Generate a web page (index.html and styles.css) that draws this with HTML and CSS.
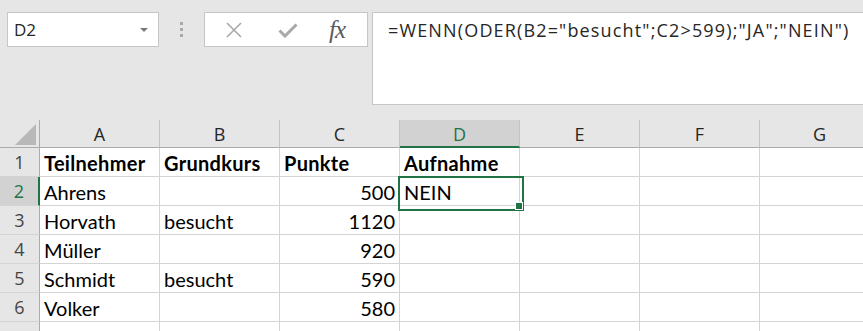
FILE: index.html
```html
<!DOCTYPE html>
<html lang="de">
<head>
<meta charset="utf-8">
<link rel="stylesheet" href="styles.css">
</head>
<body>
<div class="bar">
  <div class="namebox">
    <span class="name">D2</span>
    <svg class="drop" width="8" height="4" viewBox="0 0 8 4"><path d="M0 0H8L4 4Z" fill="#7a7a7a"/></svg>
  </div>
  <div class="dots"><i></i><i></i><i></i></div>
  <div class="buttons">
    <svg class="ico" width="18" height="16" viewBox="0 0 18 16"><path d="M2 1L16 15M16 1L2 15" stroke="#a9a9a9" stroke-width="1.6" fill="none"/></svg>
    <svg class="ico" width="20" height="16" viewBox="0 0 20 16"><path d="M1.5 8.5L7 14L18.5 2.5" stroke="#a9a9a9" stroke-width="3" fill="none"/></svg>
    <span class="fx">fx</span>
  </div>
  <div class="formula">=WENN(ODER(B2="besucht";C2&gt;599);"JA";"NEIN")</div>
</div>
<div class="sheet">
  <div class="corner"><span class="tri"></span></div>
  <div class="ch">A</div><div class="ch">B</div><div class="ch">C</div><div class="ch sel">D</div><div class="ch">E</div><div class="ch">F</div><div class="ch">G</div>

  <div class="rh">1</div>
  <div class="c b">Teilnehmer</div><div class="c b">Grundkurs</div><div class="c b">Punkte</div><div class="c b">Aufnahme</div><div class="c"></div><div class="c"></div><div class="c"></div>

  <div class="rh sel">2</div>
  <div class="c">Ahrens</div><div class="c"></div><div class="c n">500</div><div class="c active">NEIN</div><div class="c"></div><div class="c"></div><div class="c"></div>

  <div class="rh">3</div>
  <div class="c">Horvath</div><div class="c">besucht</div><div class="c n">1120</div><div class="c"></div><div class="c"></div><div class="c"></div><div class="c"></div>

  <div class="rh">4</div>
  <div class="c">Müller</div><div class="c"></div><div class="c n">920</div><div class="c"></div><div class="c"></div><div class="c"></div><div class="c"></div>

  <div class="rh">5</div>
  <div class="c">Schmidt</div><div class="c">besucht</div><div class="c n">590</div><div class="c"></div><div class="c"></div><div class="c"></div><div class="c"></div>

  <div class="rh">6</div>
  <div class="c">Volker</div><div class="c"></div><div class="c n">580</div><div class="c"></div><div class="c"></div><div class="c"></div><div class="c"></div>

  <div class="rh"></div>
  <div class="c"></div><div class="c"></div><div class="c"></div><div class="c"></div><div class="c"></div><div class="c"></div><div class="c"></div>
</div>
</body>
</html>
```

FILE: styles.css
```css
* { box-sizing: border-box; }
html, body { margin: 0; padding: 0; }
body {
  width: 863px;
  height: 331px;
  overflow: hidden;
  background: #e6e6e6;
  font-family: "Open Sans", "Noto Sans", sans-serif;
}
.bar {
  display: flex;
  align-items: flex-start;
  padding: 12px 0 0 7px;
  height: 120px;
}
.namebox {
  width: 152px;
  height: 35px;
  background: #fff;
  border: 1px solid #c6c6c6;
  display: flex;
  align-items: center;
  justify-content: space-between;
  padding: 0 10px 0 6px;
}
.name {
  font-size: 17px;
  color: #262626;
}
.dots {
  width: 45px;
  height: 35px;
  display: flex;
  flex-direction: column;
  align-items: center;
  justify-content: center;
  gap: 3px;
}
.dots i {
  display: block;
  width: 3px;
  height: 3px;
  background: #a9a9a9;
}
.buttons {
  width: 164px;
  height: 35px;
  background: #fff;
  border: 1px solid #c6c6c6;
  display: flex;
  align-items: center;
  padding: 0 0 0 20px;
  gap: 35px;
}
.ico { display: block; }
.fx {
  font-family: "Liberation Serif", "DejaVu Serif", serif;
  font-style: italic;
  font-size: 25px;
  line-height: 1;
  color: #5a5a5a;
  margin-left: -4px;
  letter-spacing: -1px;
}
.formula {
  margin-left: 4px;
  flex: 1;
  height: 93px;
  background: #fff;
  border: 1px solid #c6c6c6;
  border-right: none;
  padding: 5px 0 0 15px;
  font-size: 18px;
  letter-spacing: 1.15px;
  color: #262626;
  white-space: nowrap;
}
.sheet {
  display: grid;
  grid-template-columns: 40px repeat(7, 120px);
  grid-template-rows: 28px repeat(7, 29px);
  font-family: "Lato", "Noto Sans", sans-serif;
  font-size: 20px;
  color: #000;
}
.corner {
  background: #e6e6e6;
  border-right: 1px solid #ababab;
  border-bottom: 1px solid #ababab;
  position: relative;
}
.tri {
  position: absolute;
  left: 15px;
  top: 4px;
  width: 0;
  height: 0;
  border-left: 21px solid transparent;
  border-bottom: 21px solid #b8b8b8;
}
.ch {
  background: #e6e6e6;
  border-right: 1px solid #c3c3c3;
  border-bottom: 1px solid #ababab;
  display: flex;
  align-items: center;
  justify-content: center;
  font-family: "Open Sans", "Noto Sans", sans-serif;
  font-size: 18px;
  color: #262626;
  padding-top: 1px;
}
.ch.sel {
  background: #d2d2d2;
  color: #217346;
  border-bottom: 2px solid #217346;
}
.rh {
  background: #e6e6e6;
  border-right: 1px solid #ababab;
  border-bottom: 1px solid #d4d4d4;
  display: flex;
  align-items: center;
  justify-content: center;
  font-family: "Open Sans", "Noto Sans", sans-serif;
  font-size: 18px;
  color: #444;
}
.rh.sel {
  background: #d2d2d2;
  color: #217346;
  border-right: 2px solid #217346;
}
.c {
  background: #fff;
  border-right: 1px solid #d4d4d4;
  border-bottom: 1px solid #d4d4d4;
  display: flex;
  align-items: center;
  padding: 1px 4px 0 4px;
  white-space: nowrap;
}
.c.b { font-weight: 700; letter-spacing: 0.3px; }
.c.n { justify-content: flex-end; }
.c.active { position: relative; }
.c.active::after {
  content: "";
  position: absolute;
  left: -2px;
  top: -1px;
  width: 122px;
  height: 31px;
  border: 2px solid #217346;
}
.c.active::before {
  content: "";
  position: absolute;
  left: 115px;
  top: 25px;
  width: 6px;
  height: 6px;
  background: #217346;
  border: 1px solid #fff;
  z-index: 2;
}
```
